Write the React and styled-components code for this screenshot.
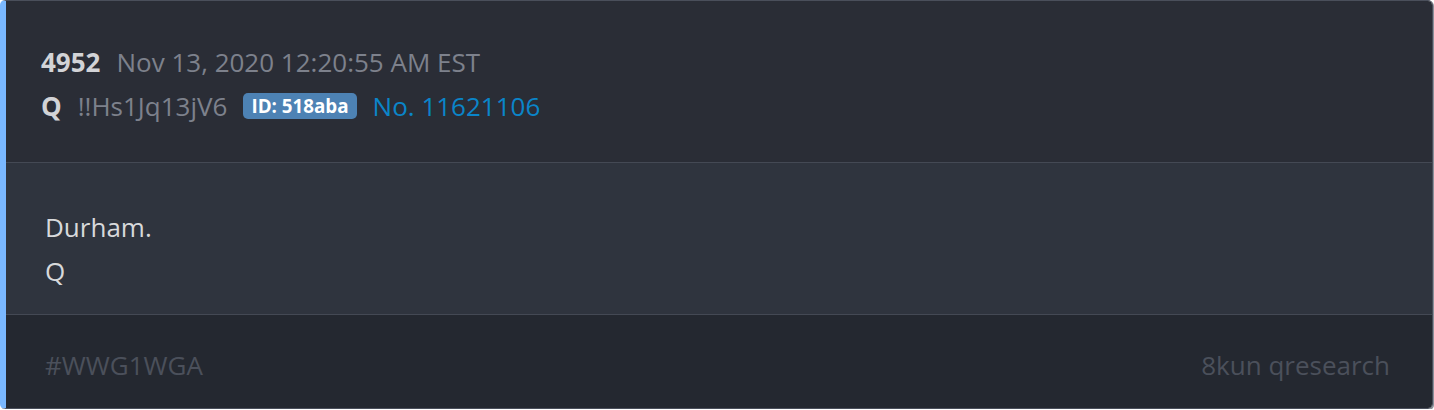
import React from "react";
import styled, { createGlobalStyle } from "styled-components";

const GlobalStyle = createGlobalStyle`
    html, body {
        margin: 0;
        padding: 0;
        background: #ffffff;
    }
    body {
        font-family: "Open Sans", "Liberation Sans", sans-serif;
    }
`;

const Card = styled.div`
    width: 1433px;
    height: 409px;
    box-sizing: border-box;
    border: 1px solid #4a4f5b;
    border-left: 6px solid #7ab8ff;
    border-radius: 5px;
    box-shadow: 1px 1px 0 #8b909a;
    overflow: hidden;
    display: flex;
    flex-direction: column;
`;

const Header = styled.div`
    background-color: #2a2d36;
    padding: 39px 36px 0 35px;
    height: 162px;
    box-sizing: border-box;
    border-bottom: 1px solid #444954;
`;

const Row = styled.div`
    display: flex;
    align-items: center;
    height: 44px;
    font-size: 26px;
    gap: 16px;
`;

const StrongText = styled.span`
    font-weight: 700;
    color: #d2d3d6;
`;

const MutedText = styled.span`
    color: #7d818c;
`;

const Badge = styled.span`
    display: inline-flex;
    align-items: center;
    height: 26px;
    padding: 0 8px;
    border-radius: 5px;
    background-color: #4d82b4;
    color: #ffffff;
    font-weight: 700;
    font-size: 18.8px;
`;

const PostLink = styled.a`
    color: #0a85c9;
    text-decoration: none;
`;

const Body = styled.div`
    background-color: #2f343e;
    padding: 42px 40px 20px 39px;
    height: 152px;
    box-sizing: border-box;
    border-bottom: 1px solid #444954;
`;

const Line = styled.p`
    margin: 0;
    font-size: 26px;
    line-height: 44px;
    color: #d8d9db;
`;

const Footer = styled.div`
    flex: 1;
    background-color: #242830;
    display: flex;
    justify-content: space-between;
    align-items: center;
    padding: 6px 42px 0 39px;
    font-size: 26px;
    color: #4b505b;
`;

function App() {
    return (
        <>
            <GlobalStyle />
            <Card>
                <Header>
                    <Row>
                        <StrongText>4952</StrongText>
                        <MutedText>Nov 13, 2020 12:20:55 AM EST</MutedText>
                    </Row>
                    <Row>
                        <StrongText>Q</StrongText>
                        <MutedText>!!Hs1Jq13jV6</MutedText>
                        <Badge>ID: 518aba</Badge>
                        <PostLink href="#">No. 11621106</PostLink>
                    </Row>
                </Header>
                <Body>
                    <Line>Durham.</Line>
                    <Line>Q</Line>
                </Body>
                <Footer>
                    <span>#WWG1WGA</span>
                    <span>8kun qresearch</span>
                </Footer>
            </Card>
        </>
    );
}

export default App;
